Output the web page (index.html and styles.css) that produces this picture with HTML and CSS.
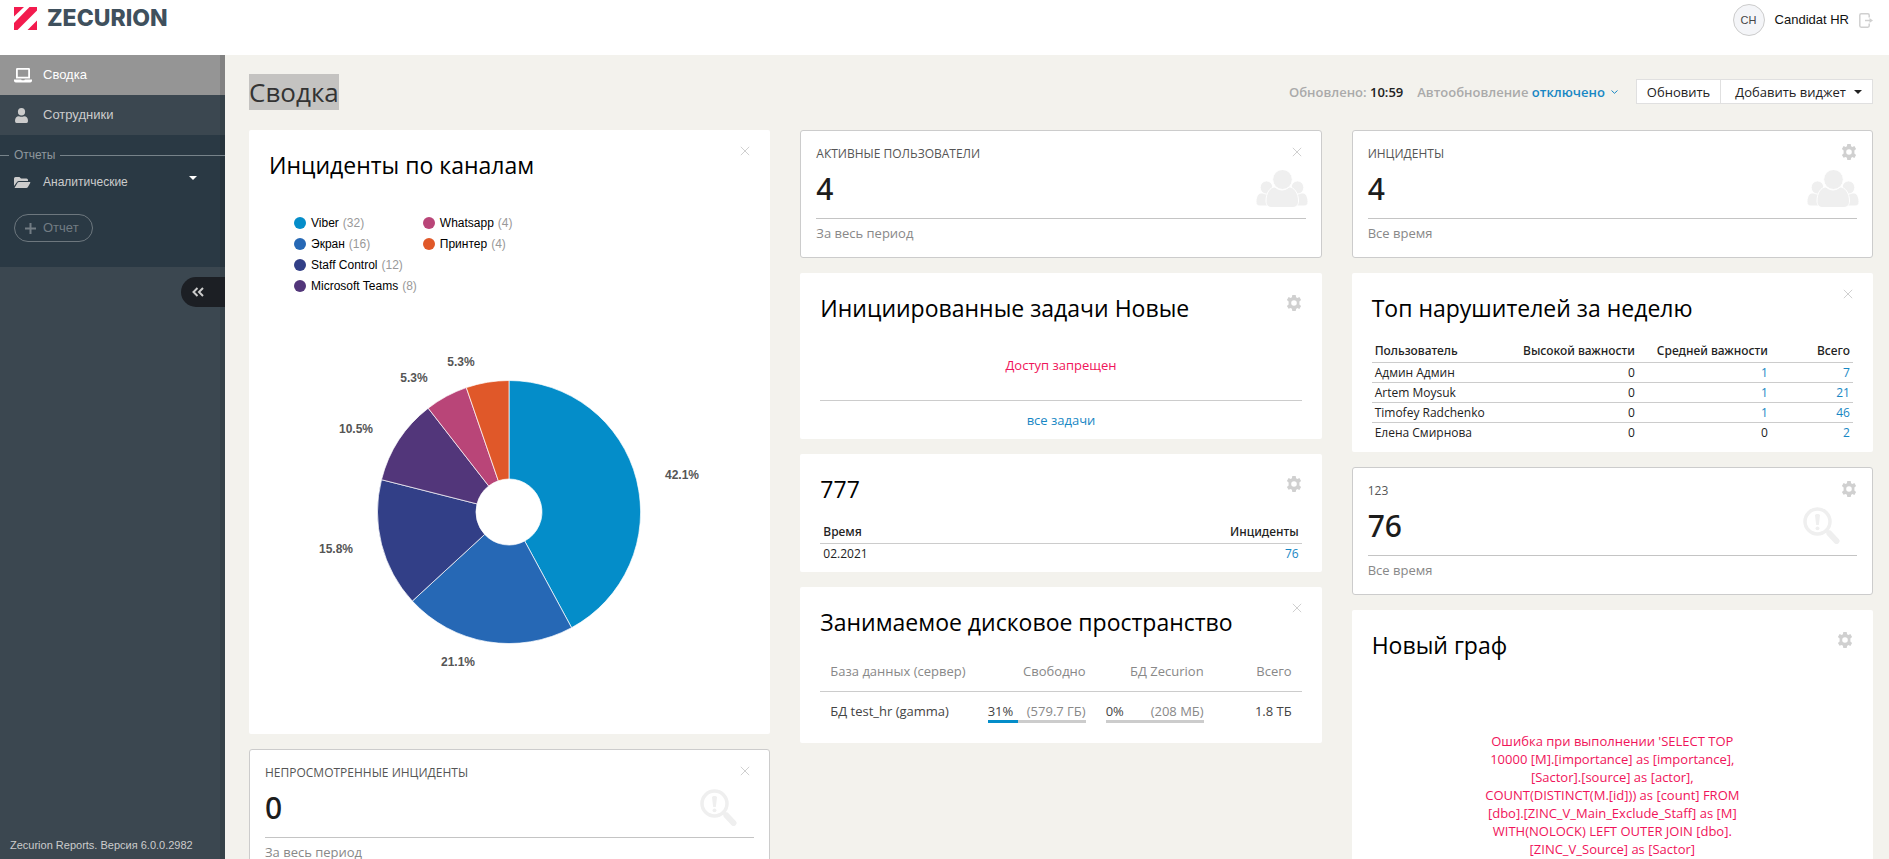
FILE: index.html
```html
<!DOCTYPE html>
<html lang="ru">
<head>
<meta charset="utf-8">
<title>Сводка — Zecurion Reports</title>
<link rel="stylesheet" href="styles.css">
</head>
<body>
<svg class="sprite" aria-hidden="true">
  <symbol id="i-close" viewBox="0 0 10 10"><path d="M.8.8l8.4 8.4M9.2.8L.8 9.2" fill="none" stroke="currentColor" stroke-width="1"/></symbol>
  <symbol id="i-gear" viewBox="0 0 16 16"><path fill="currentColor" fill-rule="evenodd" d="M6.3 0h3.4l.4 2.2 1.2.7 2.1-.8 1.7 2.9-1.7 1.5v1.500v1.500l1.700 1.500-1.700 2.900-2.100-.8-1.200.8L9.700 16H6.300l-.4-2.200-1.200-.8-2.100.8-1.700-2.900 1.700-1.500V6.600L.9 5l1.700-2.900 2.100.8 1.200-.7zM8 5.200a2.800 2.800 0 1 0 0 5.600 2.800 2.800 0 0 0 0-5.600z"/></symbol>
  <symbol id="i-people" viewBox="0 0 52 37">
    <g fill="currentColor" stroke="#fff" stroke-width="1">
      <path d="M0 31.500c0-5 2.500-8.500 5.500-8.500h8v13H4c-3 0-4-1.500-4-4.500zM52 31.500c0-5-2.500-8.500-5.500-8.500h-8v13H48c3 0 4-1.500 4-4.500z"/>
      <ellipse cx="10.500" cy="17.500" rx="6.300" ry="6.600"/><ellipse cx="41.500" cy="17.500" rx="6.300" ry="6.600"/>
      <path d="M10 31c0-8 4-14 9-14 4 4 10 4 14 0 5 0 9.500 6 9.500 14 0 4-2 6.500-6 6.500H16c-4 0-6-2.500-6-6.500z"/>
      <ellipse cx="26.500" cy="9.500" rx="9.800" ry="10"/>
    </g>
  </symbol>
  <symbol id="i-alert" viewBox="0 0 37 37">
    <circle cx="14.500" cy="14.500" r="12.500" fill="none" stroke="currentColor" stroke-width="3.500"/>
    <path d="M24 24l3 3" stroke="currentColor" stroke-width="3.500"/>
    <path d="M26.500 26.500l7 7.500" stroke="currentColor" stroke-width="6" stroke-linecap="round"/>
    <path d="M12 8.500c0-2 5-2 5 0l-1.200 9.500h-2.600z" fill="currentColor"/><circle cx="14.500" cy="21.300" r="1.900" fill="currentColor"/>
  </symbol>
</svg>

<header class="topbar">
  <a class="brand" href="#">
    <svg width="23" height="23" viewBox="0 0 23 23" aria-hidden="true"><path fill="#f31b4e" d="M0 0h10L0 9.500zM15.500 0H23v3.500L3.500 23H0v-7zM23 13.500V23H13.500z"/></svg>
    <span class="brand-name">ZECURION</span>
  </a>
  <div class="user">
    <span class="avatar">CH</span>
    <span class="user-name">Candidat HR</span>
    <button class="icon-btn logout" aria-label="Выход">
      <svg width="14" height="15" viewBox="0 0 14 15" fill="none" stroke="currentColor" aria-hidden="true"><path stroke-width="1.500" d="M10.200 4.500V2.200Q10.200.8 8.800.8H2.200Q.8.800.8 2.200v10.600q0 1.400 1.400 1.400h6.600q1.400 0 1.400-1.400v-2.300"/><path d="M6 7.500h5" stroke-width="1.500"/><path d="M10.500 5l3.500 2.500-3.500 2.500z" fill="currentColor" stroke="none"/></svg>
    </button>
  </div>
</header>

<div class="shell">
  <aside class="sidebar">
    <nav class="menu">
      <a class="menu-item is-active" href="#">
        <svg class="menu-icon" viewBox="0 0 18 15" aria-hidden="true"><path fill="currentColor" fill-rule="evenodd" d="M3.200 0h11.600Q16 0 16 1.200V10.500H2V1.200Q2 0 3.200 0zM3.800 1.800v7h10.400v-7zM0 11.500h7.200l.5.8h2.600l.5-.8H18v1.200q0 1.800-1.800 1.800H1.800Q0 14.500 0 12.700z"/></svg>
        Сводка</a>
      <a class="menu-item" href="#">
        <svg class="menu-icon" viewBox="0 0 18 15" aria-hidden="true"><ellipse cx="7.500" cy="3.800" rx="3.600" ry="3.800" fill="currentColor"/><path fill="currentColor" d="M1 13q0-4.500 4-4.700 2.500 1 5 0 4 .2 4 4.700 0 2-1.500 2h-10Q1 15 1 13z"/></svg>
        Сотрудники</a>
    </nav>
    <section class="reports">
      <h2 class="reports-title">Отчеты</h2>
      <a class="menu-item menu-item-folder" href="#">
        <svg class="menu-icon" viewBox="0 0 18 15" aria-hidden="true"><path fill="currentColor" d="M0 11V3.500Q0 2 1.500 2h4L7 3.500h5.500Q14 3.500 14 5v1H5Q3.600 6 3 7zM.5 13L3.700 7.600Q4 7 5 7h10.800q1 0 .4 1l-2.400 4.200q-.5.8-1.500.8z"/></svg>
        Аналитические
        <svg class="menu-caret" width="8" height="4" viewBox="0 0 8 4" aria-hidden="true"><path d="M0 0h8L4 4z" fill="#fff"/></svg></a>
      <button class="add-report">
        <svg width="11" height="11" viewBox="0 0 11 11" aria-hidden="true"><path d="M5.500 0v11M0 5.500h11" stroke="currentColor" stroke-width="2"/></svg>
        Отчет</button>
    </section>
    <button class="collapse" aria-label="Свернуть меню">
      <svg width="12" height="10" viewBox="0 0 12 10" aria-hidden="true"><path d="M5.500 1L1.500 5l4 4M11 1L7 5l4 4" fill="none" stroke="currentColor" stroke-width="2"/></svg>
    </button>
    <p class="version">Zecurion Reports. Версия 6.0.0.2982</p>
  </aside>

  <main class="main">
    <div class="page-head">
      <h1 class="page-title"><span class="selected">Сводка</span></h1>
      <div class="refresh">
        <span>Обновлено: <b class="refresh-time">10:59</b></span>
        <span>Автообновление <a class="refresh-mode" href="#">отключено
          <svg width="7" height="4" viewBox="0 0 7 4" aria-hidden="true"><path d="M.5.5l3 2.800 3-2.800" fill="none" stroke="currentColor"/></svg></a></span>
        <div class="btn-group">
          <button class="btn">Обновить</button>
          <button class="btn btn-add">Добавить виджет
            <svg width="8" height="4" viewBox="0 0 8 4" aria-hidden="true"><path d="M0 0h8L4 4z" fill="currentColor"/></svg></button>
        </div>
      </div>
    </div>

    <div class="board">
      <div class="column">
        <article class="card">
          <button class="icon-btn corner corner-close" aria-label="Закрыть"><svg width="10" height="10"><use href="#i-close"/></svg></button>
          <h2 class="card-title">Инциденты по каналам</h2>
          <ul class="legend">
            <li class="viber">Viber <span>(32)</span></li>
            <li class="screen">Экран <span>(16)</span></li>
            <li class="staff">Staff Control <span>(12)</span></li>
            <li class="teams">Microsoft Teams <span>(8)</span></li>
            <li class="whatsapp">Whatsapp <span>(4)</span></li>
            <li class="printer">Принтер <span>(4)</span></li>
          </ul>
          <svg class="pie" width="442" height="350" viewBox="-220 -175 442 350" role="img" aria-label="Инциденты по каналам">
            <g stroke="#fff" stroke-opacity=".7" stroke-width="1">
              <path fill="#048dc9" d="M0-131.500A131.500 131.500 0 0 1 62.600 115.700L15.700 29A33 33 0 0 0 0-33z"/>
              <path fill="#2668b5" d="M62.600 115.700A131.500 131.500 0 0 1-96.700 89.100L-24.300 22.400A33 33 0 0 0 15.700 29z"/>
              <path fill="#323f87" d="M-96.700 89.100A131.500 131.500 0 0 1-127.500-32.300L-32-8.100A33 33 0 0 0-24.300 22.400z"/>
              <path fill="#52367a" d="M-127.500-32.300A131.500 131.500 0 0 1-80.800-103.800L-20.300-26A33 33 0 0 0-32-8.100z"/>
              <path fill="#b94578" d="M-80.800-103.800A131.500 131.500 0 0 1-42.700-124.400L-10.700-31.200A33 33 0 0 0-20.300-26z"/>
              <path fill="#e05829" d="M-42.700-124.400A131.500 131.500 0 0 1 0-131.500L0-33A33 33 0 0 0-10.700-31.200z"/>
            </g>
            <g class="pie-labels">
              <text x="173" y="-33">42.1%</text>
              <text x="-51" y="154">21.1%</text>
              <text x="-173" y="41">15.8%</text>
              <text x="-153" y="-79">10.5%</text>
              <text x="-95" y="-130">5.3%</text>
              <text x="-48" y="-146">5.3%</text>
            </g>
          </svg>
        </article>
        <article class="stat">
          <button class="icon-btn corner corner-close" aria-label="Закрыть"><svg width="10" height="10"><use href="#i-close"/></svg></button>
          <h2 class="stat-name">НЕПРОСМОТРЕННЫЕ ИНЦИДЕНТЫ</h2>
          <div class="stat-body"><strong>0</strong><svg class="alert" width="37" height="37" aria-hidden="true"><use href="#i-alert"/></svg></div>
          <p class="stat-period">За весь период</p>
        </article>
      </div>

      <div class="column">
        <article class="stat">
          <button class="icon-btn corner corner-close" aria-label="Закрыть"><svg width="10" height="10"><use href="#i-close"/></svg></button>
          <h2 class="stat-name">АКТИВНЫЕ ПОЛЬЗОВАТЕЛИ</h2>
          <div class="stat-body"><strong>4</strong><svg class="people" width="52" height="37" aria-hidden="true"><use href="#i-people"/></svg></div>
          <p class="stat-period">За весь период</p>
        </article>
        <article class="card">
          <button class="icon-btn corner corner-gear" aria-label="Настройки"><svg width="16" height="16"><use href="#i-gear"/></svg></button>
          <h2 class="card-title">Инициированные задачи Новые</h2>
          <p class="denied">Доступ запрещен</p>
          <p class="all-tasks"><a href="#">все задачи</a></p>
        </article>
        <article class="card">
          <button class="icon-btn corner corner-gear" aria-label="Настройки"><svg width="16" height="16"><use href="#i-gear"/></svg></button>
          <h2 class="card-title">777</h2>
          <table class="grid">
            <thead><tr><th>Время</th><th>Инциденты</th></tr></thead>
            <tbody><tr><td>02.2021</td><td><a href="#">76</a></td></tr></tbody>
          </table>
        </article>
        <article class="card">
          <button class="icon-btn corner corner-close" aria-label="Закрыть"><svg width="10" height="10"><use href="#i-close"/></svg></button>
          <h2 class="card-title">Занимаемое дисковое пространство</h2>
          <table class="disk">
            <thead><tr><th>База данных (сервер)</th><th>Свободно</th><th>БД Zecurion</th><th>Всего</th></tr></thead>
            <tbody><tr>
              <td>БД test_hr (gamma)</td>
              <td><div class="usage">31% <span>(579.7 ГБ)</span></div><div class="bar"><div class="bar-fill" style="width:31%"></div></div></td>
              <td><div class="usage">0% <span>(208 МБ)</span></div><div class="bar"><div class="bar-fill" style="width:0%"></div></div></td>
              <td>1.8 ТБ</td>
            </tr></tbody>
          </table>
        </article>
      </div>

      <div class="column">
        <article class="stat">
          <button class="icon-btn corner corner-gear" aria-label="Настройки"><svg width="16" height="16"><use href="#i-gear"/></svg></button>
          <h2 class="stat-name">ИНЦИДЕНТЫ</h2>
          <div class="stat-body"><strong>4</strong><svg class="people" width="52" height="37" aria-hidden="true"><use href="#i-people"/></svg></div>
          <p class="stat-period">Все время</p>
        </article>
        <article class="card">
          <button class="icon-btn corner corner-close" aria-label="Закрыть"><svg width="10" height="10"><use href="#i-close"/></svg></button>
          <h2 class="card-title">Топ нарушителей за неделю</h2>
          <table class="grid grid-top">
            <thead><tr><th>Пользователь</th><th>Высокой важности</th><th>Средней важности</th><th>Всего</th></tr></thead>
            <tbody>
              <tr><td>Админ Админ</td><td>0</td><td><a href="#">1</a></td><td><a href="#">7</a></td></tr>
              <tr><td>Artem Moysuk</td><td>0</td><td><a href="#">1</a></td><td><a href="#">21</a></td></tr>
              <tr><td>Timofey Radchenko</td><td>0</td><td><a href="#">1</a></td><td><a href="#">46</a></td></tr>
              <tr><td>Елена Смирнова</td><td>0</td><td>0</td><td><a href="#">2</a></td></tr>
            </tbody>
          </table>
        </article>
        <article class="stat">
          <button class="icon-btn corner corner-gear" aria-label="Настройки"><svg width="16" height="16"><use href="#i-gear"/></svg></button>
          <h2 class="stat-name">123</h2>
          <div class="stat-body"><strong>76</strong><svg class="alert" width="37" height="37" aria-hidden="true"><use href="#i-alert"/></svg></div>
          <p class="stat-period">Все время</p>
        </article>
        <article class="card">
          <button class="icon-btn corner corner-gear" aria-label="Настройки"><svg width="16" height="16"><use href="#i-gear"/></svg></button>
          <h2 class="card-title">Новый граф</h2>
          <p class="sql-error">Ошибка при выполнении 'SELECT TOP 10000 [M].[importance] as [importance], [Sactor].[source] as [actor], COUNT(DISTINCT(M.[id])) as [count] FROM [dbo].[ZINC_V_Main_Exclude_Staff] as [M] WITH(NOLOCK) LEFT OUTER JOIN [dbo].<wbr>[ZINC_V_Source] as [Sactor]</p>
        </article>
      </div>
    </div>
  </main>
</div>
</body>
</html>
```
FILE: styles.css
```css
* { box-sizing: border-box; }

body {
  margin: 0;
  height: 100vh;
  display: flex;
  flex-direction: column;
  overflow: hidden;
  background: #f3f2ed;
  color: #222;
  font: 13px/18px "Open Sans", "Noto Sans", sans-serif;
}

h1, h2, p, ul { margin: 0; padding: 0; font-weight: 400; }
a { color: #1787c4; text-decoration: none; }
button { font: inherit; color: inherit; background: none; border: 0; padding: 0; cursor: pointer; }
svg { display: block; flex: none; }
.sprite { position: absolute; width: 0; height: 0; }

/* Top bar */
.topbar {
  flex: none;
  height: 55px;
  padding: 4px 16px 0 14px;
  display: flex;
  justify-content: space-between;
  align-items: flex-start;
  background: #fff;
  font-family: "Liberation Sans", Arial, sans-serif;
}
.brand { display: flex; align-items: center; gap: 10px; padding-top: 3px; }
.brand-name { font: 800 23px/23px Inter, sans-serif; color: #3f505d; }
.user { display: flex; align-items: center; }
.avatar {
  width: 32px;
  height: 32px;
  margin-right: 10px;
  border: 1px solid #ccc;
  border-radius: 50%;
  background: #f4f5f8;
  color: #444;
  font-size: 11px;
  line-height: 30px;
  text-align: center;
}
.user-name { font-size: 13px; color: #111; }
.logout { margin-left: 10px; color: #bbb; }

/* Sidebar */
.shell { flex: 1; min-height: 0; display: flex; }
.sidebar {
  flex: none;
  width: 225px;
  display: flex;
  flex-direction: column;
  background: linear-gradient(to left, #364249 5px, #3b4750 5px);
  color: #ccc;
  font: 13px/16px "Liberation Sans", Arial, sans-serif;
}
.menu-item {
  display: flex;
  align-items: center;
  gap: 11px;
  height: 40px;
  padding: 0 28px 0 14px;
  color: #ccc;
}
.menu-icon { width: 18px; height: 15px; }
.menu-item.is-active { background: linear-gradient(to left, #828282 5px, #959595 5px); color: #fff; }
.reports { height: 132px; padding-top: 12px; background: linear-gradient(to left, #27343c 5px, #2a3944 5px); }
.reports-title {
  display: flex;
  align-items: center;
  gap: 5px;
  font-size: 12px;
  color: #8e979d;
}
.reports-title::before { content: ""; width: 9px; height: 1px; background: #77838a; }
.reports-title::after { content: ""; flex: 1; height: 1px; background: #77838a; }
.menu-item-folder { height: 38px; font-size: 12px; }
.menu-caret { margin-left: auto; margin-bottom: 8px; }
.add-report {
  display: flex;
  align-items: center;
  gap: 7px;
  height: 28px;
  margin: 13px 0 0 14px;
  padding: 0 13px 0 10px;
  border: 1px solid #6d777e;
  border-radius: 14px;
  color: #727c83;
}
.collapse {
  align-self: flex-end;
  width: 44px;
  height: 30px;
  margin-top: 10px;
  padding-left: 11px;
  border-radius: 15px 0 0 15px;
  background: #1c1f24;
  color: #ccc;
}
.version { margin-top: auto; padding: 0 10px 6px; font-size: 11px; }

/* Page head */
.main { flex: 1; min-width: 0; padding: 20px 16px 20px 24px; overflow-y: auto; scrollbar-width: none; }
.page-head { display: flex; justify-content: space-between; align-items: flex-start; height: 55px; }
.page-title { font-size: 26px; line-height: 34px; color: #333; }
.selected { background: #c4c3c1; }
.refresh { display: flex; align-items: center; gap: 14px; padding-top: 4px; color: #aaa; font-weight: 600; }
.refresh-time { color: #222; font-weight: 600; }
.refresh-mode { display: inline-flex; align-items: center; gap: 6px; }
.btn-group { display: flex; margin-left: 4px; }
.btn {
  height: 25px;
  padding: 0 10px;
  border: 1px solid #e0e0e0;
  background: #fff;
  color: #222;
  font-weight: 400;
}
.btn-add { display: flex; align-items: center; gap: 8px; margin-left: -1px; padding-left: 14px; }

/* Board */
.board { display: grid; grid-template-columns: repeat(3, minmax(0, 1fr)); gap: 30px; align-items: start; }
.column { display: grid; gap: 15px; }

.card { position: relative; padding: 20px 20px 8px; background: #fff; border-radius: 2px; }
.card-title { font-size: 23px; line-height: 30px; color: #000; }
.icon-btn { color: #d0d0d0; }
.corner { position: absolute; }
.card .corner-close { top: 16px; right: 20px; }
.card .corner-gear { top: 22px; right: 20px; }
.stat .corner-close { top: 16px; right: 19px; }
.stat .corner-gear { top: 13px; right: 15px; }

.stat {
  position: relative;
  height: 128px;
  padding: 13px 15px;
  background: #fff;
  border: 1px solid #ccc;
  border-radius: 3px;
}
.stat-name { font-size: 12px; line-height: 20px; color: #555; }
.stat-body {
  display: flex;
  justify-content: space-between;
  align-items: center;
  height: 55px;
  padding-bottom: 5px;
  border-bottom: 1px solid #c4c4c4;
}
.stat-body strong { font: 500 30px/40px "Noto Sans", "Open Sans", sans-serif; color: #1c1c1c; }
.stat-body svg { color: #efefef; }
.people { margin-right: -2px; }
.alert { margin-right: 17px; }
.stat-period { padding-top: 5px; color: #888; }

/* Channel chart */
.legend {
  display: grid;
  grid-template-rows: repeat(4, 21px);
  grid-auto-flow: column;
  grid-auto-columns: max-content;
  column-gap: 6px;
  align-items: center;
  margin: 32px 25px 0;
  list-style: none;
  font: 12px/16px "Liberation Sans", Arial, sans-serif;
  color: #000;
}
.legend li { display: flex; align-items: center; gap: 4px; }
.legend li::before { content: ""; width: 12px; height: 12px; margin-right: 1px; border-radius: 50%; background: currentColor; }
.legend span { color: #999; }
.legend .viber::before { background: #048dc9; }
.legend .screen::before { background: #2668b5; }
.legend .staff::before { background: #323f87; }
.legend .teams::before { background: #52367a; }
.legend .whatsapp::before { background: #b94578; }
.legend .printer::before { background: #e05829; }
.pie { max-width: 100%; margin: 41px auto 39px; }
.pie-labels { font: 700 12px "Liberation Sans", Arial, sans-serif; fill: #555; text-anchor: middle; }

/* Tasks */
.denied {
  padding: 33px 0 26px;
  border-bottom: 1px solid #ccc;
  text-align: center;
  color: #f0145a;
}
.all-tasks { padding: 10px 0 2px; text-align: center; }

/* Tables */
table { width: 100%; border-collapse: collapse; }
th:not(:first-child), td:not(:first-child) { text-align: right; }
th { text-align: left; font-weight: 400; }
.grid { margin: 15px 0 1px; font-size: 12px; line-height: 19px; }
.grid th { padding: 3px 3px 2px; font-family: "Noto Sans", "Open Sans", sans-serif; font-weight: 500; }
.grid td { padding: 0 3px; border-top: 1px solid #ccc; }
.grid-top { table-layout: fixed; margin-bottom: 2px; }
.grid-top th { width: 133px; white-space: nowrap; }
.grid-top th:first-child { width: auto; }
.grid-top th:last-child { width: 82px; }

.disk { margin-top: 14px; color: #444; }
.disk th { padding: 11px 10px; color: #888; border-bottom: 1px solid #ccc; white-space: nowrap; }
.disk td { padding: 10px 10px 12px; vertical-align: top; white-space: nowrap; }
.disk th:nth-child(2), .disk th:nth-child(3) { width: 118px; }
.disk th:last-child { width: 88px; }
.usage { display: flex; justify-content: space-between; }
.usage span { color: #888; }
.bar { height: 3px; background: #ccc; }
.bar-fill { height: 3px; background: #048dc9; }

.sql-error {
  width: 260px;
  margin: 72px auto 20px;
  text-align: center;
  color: #f0145a;
}
```
